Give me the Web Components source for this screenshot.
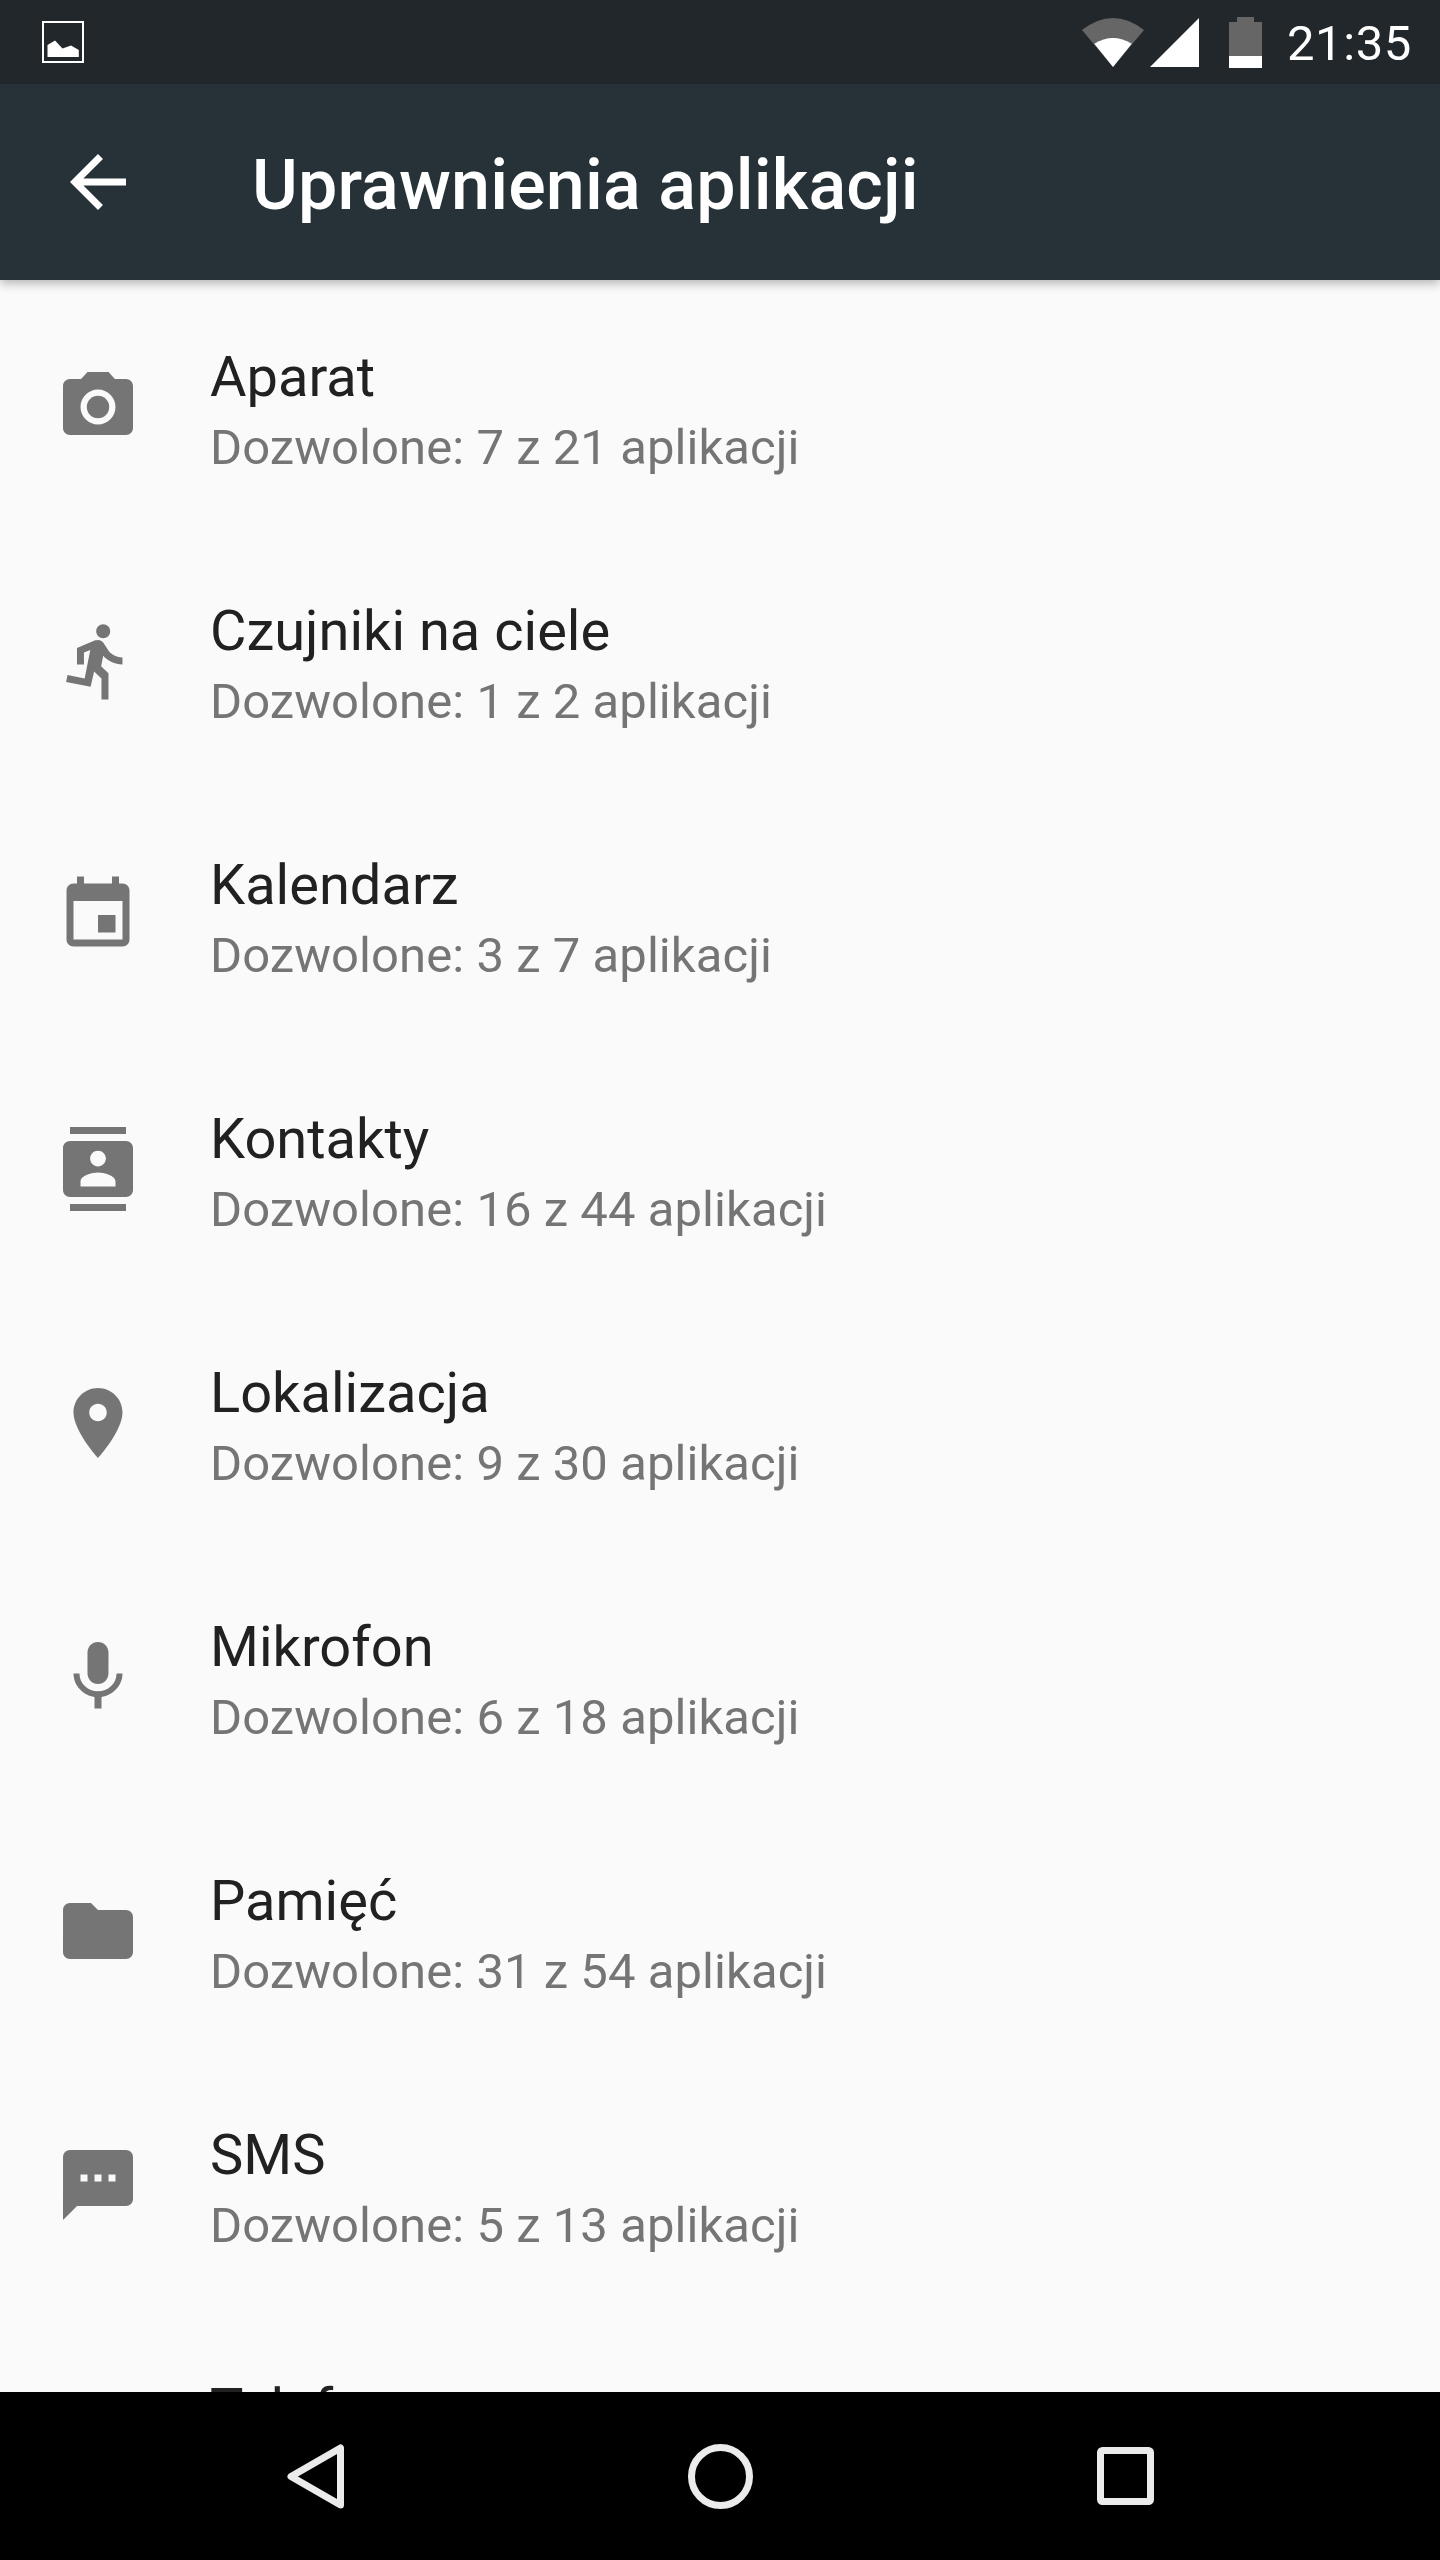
<!DOCTYPE html>
<html lang="pl">
<head>
<meta charset="utf-8">
<title>Uprawnienia aplikacji</title>
<style>
  html, body { margin: 0; padding: 0; background: #fafafa; }
  body { font-family: Roboto, "Noto Sans", sans-serif; }
</style>
</head>
<body>
<permissions-screen>
  <status-bar slot="top" time="21:35"></status-bar>
  <app-toolbar slot="top">Uprawnienia aplikacji</app-toolbar>
  <perm-row icon="camera" summary="Dozwolone: 7 z 21 aplikacji">Aparat</perm-row>
  <perm-row icon="run" summary="Dozwolone: 1 z 2 aplikacji">Czujniki na ciele</perm-row>
  <perm-row icon="event" summary="Dozwolone: 3 z 7 aplikacji">Kalendarz</perm-row>
  <perm-row icon="contacts" summary="Dozwolone: 16 z 44 aplikacji">Kontakty</perm-row>
  <perm-row icon="place" summary="Dozwolone: 9 z 30 aplikacji">Lokalizacja</perm-row>
  <perm-row icon="mic" summary="Dozwolone: 6 z 18 aplikacji">Mikrofon</perm-row>
  <perm-row icon="folder" summary="Dozwolone: 31 z 54 aplikacji">Pamięć</perm-row>
  <perm-row icon="sms" summary="Dozwolone: 5 z 13 aplikacji">SMS</perm-row>
  <perm-row icon="phone" summary="Dozwolone: 8 z 26 aplikacji">Telefon</perm-row>
  <nav-bar slot="bottom"></nav-bar>
</permissions-screen>

<script>
const PERM_ICONS = {
  camera: '<circle cx="12" cy="12" r="3.2"/><path d="M9 2L7.17 4H4c-1.1 0-2 .9-2 2v12c0 1.1.9 2 2 2h16c1.1 0 2-.9 2-2V6c0-1.1-.9-2-2-2h-3.17L15 2H9zm3 15c-2.76 0-5-2.24-5-5s2.24-5 5-5 5 2.24 5 5-2.24 5-5 5z"/>',
  run: '<path d="M13.49 5.48c1.1 0 2-.9 2-2s-.9-2-2-2-2 .9-2 2 .9 2 2 2zm-3.6 13.9l1-4.4 2.1 2v6h2v-7.5l-2.1-2 .6-3c1.3 1.5 3.3 2.5 5.5 2.5v-2c-1.9 0-3.5-1-4.3-2.4l-1-1.6c-.4-.6-1-1-1.7-1-.3 0-.5.1-.8.1l-5.2 2.2v4.7h2v-3.4l1.8-.7-1.6 8.1-4.9-1-.4 2 7 1.4z"/>',
  event: '<path d="M17 12h-5v5h5v-5zM16 1v2H8V1H6v2H5c-1.11 0-1.99.9-1.99 2L3 19c0 1.1.89 2 2 2h14c1.1 0 2-.9 2-2V5c0-1.1-.9-2-2-2h-1V1h-2zm3 18H5V8h14v11z"/>',
  contacts: '<path d="M20 0H4v2h16V0zM4 24h16v-2H4v2zM20 4H4c-1.1 0-2 .9-2 2v12c0 1.1.9 2 2 2h16c1.1 0 2-.9 2-2V6c0-1.1-.9-2-2-2zm-8 2.75c1.24 0 2.25 1.01 2.25 2.25s-1.01 2.25-2.25 2.25S9.75 10.24 9.75 9 10.76 6.75 12 6.75zM17 17H7v-1.5c0-1.67 3.33-2.5 5-2.5s5 .83 5 2.5V17z"/>',
  place: '<path d="M12 2C8.13 2 5 5.13 5 9c0 5.25 7 13 7 13s7-7.75 7-13c0-3.87-3.13-7-7-7zm0 9.5c-1.38 0-2.5-1.12-2.5-2.5s1.12-2.5 2.5-2.5 2.5 1.12 2.5 2.5-1.12 2.5-2.5 2.5z"/>',
  mic: '<path d="M12 14c1.66 0 2.99-1.34 2.99-3L15 5c0-1.66-1.34-3-3-3S9 3.34 9 5v6c0 1.66 1.34 3 3 3zm5.3-3c0 3-2.54 5.1-5.3 5.1S6.7 14 6.7 11H5c0 3.41 2.72 6.23 6 6.72V21h2v-3.28c3.28-.48 6-3.3 6-6.72h-1.7z"/>',
  folder: '<path d="M10 4H4c-1.1 0-1.99.9-1.99 2L2 18c0 1.1.9 2 2 2h16c1.1 0 2-.9 2-2V8c0-1.1-.9-2-2-2h-8l-2-2z"/>',
  sms: '<path d="M20 2H4c-1.1 0-1.99.9-1.99 2L2 22l4-4h14c1.1 0 2-.9 2-2V4c0-1.1-.9-2-2-2zM9 11H7V9h2v2zm4 0h-2V9h2v2zm4 0h-2V9h2v2z"/>',
  phone: '<path d="M6.62 10.79c1.44 2.83 3.76 5.14 6.59 6.59l2.2-2.2c.27-.27.67-.36 1.02-.24 1.12.37 2.33.57 3.57.57.55 0 1 .45 1 1V20c0 .55-.45 1-1 1-9.39 0-17-7.61-17-17 0-.55.45-1 1-1h3.5c.55 0 1 .45 1 1 0 1.25.2 2.45.57 3.57.11.35.03.74-.25 1.02l-2.2 2.2z"/>'
};

class PermissionsScreen extends HTMLElement {
  connectedCallback() {
    this.attachShadow({ mode: 'open' });
    this.shadowRoot.innerHTML = `<style>
      :host { display: flex; flex-direction: column; width: 1440px; height: 2560px; overflow: hidden; background: #fafafa; }
      header { position: relative; z-index: 1; box-shadow: 0 3px 10px rgba(0,0,0,.3); flex: none; }
      main { flex: 1; min-height: 0; overflow: hidden; }
      footer { flex: none; }
    </style>
    <header><slot name="top"></slot></header>
    <main><slot></slot></main>
    <footer><slot name="bottom"></slot></footer>`;
  }
}

class StatusBar extends HTMLElement {
  connectedCallback() {
    this.attachShadow({ mode: 'open' });
    this.shadowRoot.innerHTML = `<style>
      :host { display: flex; align-items: center; height: 84px; padding: 0 28px 0 42px; background: #21272b; color: #fff; }
      svg { display: block; flex: none; }
      .right { margin-left: auto; display: flex; align-items: center; }
      .time { margin-left: 25px; padding-top: 4px; letter-spacing: .6px; font: 400 49px/84px Roboto, sans-serif; }
    </style>
    <svg width="42" height="42" viewBox="0 0 42 42">
      <rect x="1" y="1" width="40" height="40" fill="none" stroke="#fff" stroke-width="2"/>
      <path fill="#fff" d="M5.5 24L13 19.5L20.500 27.500L29 24.500L36.800 29V36H5.500Z"/>
    </svg>
    <div class="right">
      <svg width="62" height="49" viewBox="0 0 62 49">
        <path fill="#666" d="M0 12Q31-12 62 12L31 49Z"/>
        <path fill="#fff" d="M12.300 25.700Q31 14.300 49.700 25.700L31 49Z"/>
      </svg>
      <svg style="margin-left:6px" width="49" height="49" viewBox="0 0 49 49">
        <path fill="#fff" d="M49 0V49H0Z"/>
      </svg>
      <svg style="margin-left:30px" width="33" height="51" viewBox="0 0 33 51">
        <path fill="#666" d="M8 0H25V5H33V39H0V5H8Z"/>
        <path fill="#fff" d="M0 39H33V51H0Z"/>
      </svg>
      <span class="time">${this.getAttribute('time')}</span>
    </div>`;
  }
}

class AppToolbar extends HTMLElement {
  connectedCallback() {
    this.attachShadow({ mode: 'open' });
    this.shadowRoot.innerHTML = `<style>
      :host { display: flex; align-items: center; height: 196px; padding-left: 56px; background: #263238; color: #fff; }
      svg { display: block; flex: none; fill: #fff; }
      .title { margin-left: 112px; padding-top: 6px; letter-spacing: .15px; font: 500 70px/84px Roboto, sans-serif; }
    </style>
    <svg width="84" height="84" viewBox="0 0 24 24"><path d="M20 11H7.830l5.590-5.590L12 4l-8 8 8 8 1.410-1.410L7.830 13H20v-2z"/></svg>
    <div class="title"><slot></slot></div>`;
  }
}

class PermRow extends HTMLElement {
  connectedCallback() {
    this.attachShadow({ mode: 'open' });
    const icon = PERM_ICONS[this.getAttribute('icon')] || '';
    this.shadowRoot.innerHTML = `<style>
      :host { display: flex; align-items: center; height: 254px; padding-left: 56px; box-sizing: border-box; }
      svg { display: block; flex: none; fill: #757575; }
      .text { margin-left: 70px; padding-top: 10px; font-family: Roboto, sans-serif; }
      .label { font-size: 56px; line-height: 70px; color: #212121; }
      .summary { font-size: 49px; line-height: 71px; letter-spacing: .06px; color: #757575; }
    </style>
    <svg width="84" height="84" viewBox="0 0 24 24">${icon}</svg>
    <div class="text">
      <div class="label"><slot></slot></div>
      <div class="summary">${this.getAttribute('summary')}</div>
    </div>`;
  }
}

class NavBar extends HTMLElement {
  connectedCallback() {
    this.attachShadow({ mode: 'open' });
    this.shadowRoot.innerHTML = `<style>
      :host { display: flex; align-items: center; height: 168px; padding-left: 287px; background: #000; }
      svg { display: block; flex: none; fill: none; stroke: #ebebeb; stroke-width: 7; stroke-linejoin: round; }
    </style>
    <svg width="57" height="65" viewBox="0 0 57 65"><path d="M53.500 4V61L4 32.500Z"/></svg>
    <svg style="margin-left:344px" width="65" height="65" viewBox="0 0 65 65"><circle cx="32.500" cy="32.500" r="29"/></svg>
    <svg style="margin-left:344px" width="57" height="58" viewBox="0 0 57 58"><rect x="3.500" y="3.500" width="50" height="51" rx="2"/></svg>`;
  }
}

customElements.define('permissions-screen', PermissionsScreen);
customElements.define('status-bar', StatusBar);
customElements.define('app-toolbar', AppToolbar);
customElements.define('perm-row', PermRow);
customElements.define('nav-bar', NavBar);
</script>
</body>
</html>
